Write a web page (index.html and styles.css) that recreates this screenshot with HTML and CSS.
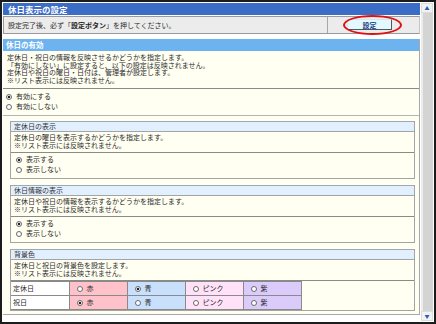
FILE: index.html
```html
<!DOCTYPE html>
<html lang="ja">
<head>
    <meta charset="UTF-8">
    <title>休日表示の設定</title>
    <link rel="stylesheet" href="styles.css">
</head>
<body>
    <div class="window">
        <div class="page">
            <div class="titlebar">休日表示の設定</div>

            <div class="notice">
                <div class="notice-text">設定完了後、必ず「<b>設定ボタン</b>」を押してください。</div>
                <div class="notice-btn">
                    <button class="btn">設定</button>
                    <span class="mark"></span>
                </div>
            </div>

            <div class="section">
                <div class="section-head">休日の有効</div>
                <div class="desc">
                    <p>定休日・祝日の情報を反映させるかどうかを指定します。</p>
                    <p>「有効にしない」に設定すると、以下の設定は反映されません。</p>
                    <p>定休日や祝日の曜日・日付は、管理者が設定します。</p>
                    <p>※リスト表示には反映されません。</p>
                </div>
                <div class="options">
                    <label class="opt"><input type="radio" name="enable" checked>有効にする</label>
                    <label class="opt"><input type="radio" name="enable">有効にしない</label>
                </div>

                <div class="sub">
                    <div class="sub-head">定休日の表示</div>
                    <div class="sub-desc">
                        <p>定休日の曜日を表示するかどうかを指定します。</p>
                        <p>※リスト表示には反映されません。</p>
                    </div>
                    <div class="sub-options">
                        <label class="opt"><input type="radio" name="weekday" checked>表示する</label>
                        <label class="opt"><input type="radio" name="weekday">表示しない</label>
                    </div>
                </div>

                <div class="sub">
                    <div class="sub-head">休日情報の表示</div>
                    <div class="sub-desc">
                        <p>定休日や祝日の情報を表示するかどうかを指定します。</p>
                        <p>※リスト表示には反映されません。</p>
                    </div>
                    <div class="sub-options">
                        <label class="opt"><input type="radio" name="info" checked>表示する</label>
                        <label class="opt"><input type="radio" name="info">表示しない</label>
                    </div>
                </div>

                <div class="sub">
                    <div class="sub-head">背景色</div>
                    <div class="sub-desc">
                        <p>定休日と祝日の背景色を設定します。</p>
                        <p>※リスト表示には反映されません。</p>
                    </div>
                    <table class="colors">
                        <tr>
                            <td class="name">定休日</td>
                            <td class="red"><label><input type="radio" name="c1">赤</label></td>
                            <td class="blue"><label><input type="radio" name="c1" checked>青</label></td>
                            <td class="pink"><label><input type="radio" name="c1">ピンク</label></td>
                            <td class="purple"><label><input type="radio" name="c1">紫</label></td>
                        </tr>
                        <tr>
                            <td class="name">祝日</td>
                            <td class="red"><label><input type="radio" name="c2" checked>赤</label></td>
                            <td class="blue"><label><input type="radio" name="c2">青</label></td>
                            <td class="pink"><label><input type="radio" name="c2">ピンク</label></td>
                            <td class="purple"><label><input type="radio" name="c2">紫</label></td>
                        </tr>
                    </table>
                </div>
            </div>
        </div>

        <div class="scrollbar">
            <div class="arrow">&#9650;</div>
            <div class="track"></div>
            <div class="arrow">&#9660;</div>
        </div>
    </div>
</body>
</html>
```

FILE: styles.css
```css
*{
    margin: 0;
    padding: 0;
    box-sizing: border-box;
}

body{
    font-family: "Noto Sans CJK JP", "Noto Sans", sans-serif;
    font-size: 7px;
    line-height: 7.5px;
    color: #2c2c2c;
    background-color: #fff;
}

.window{
    width: 436px;
    height: 324px;
    border: 2px solid #1c1c1c;
    padding: 1px;
    display: flex;
    gap: 1px;
    overflow: hidden;
}

.page{
    flex: 1;
    display: flex;
    flex-direction: column;
    overflow: hidden;
}

.titlebar{
    height: 12px;
    padding-left: 5px;
    background-color: #3b6cc6;
    color: #fff;
    font-size: 8.5px;
    line-height: 12px;
    font-weight: bold;
}

.notice{
    display: flex;
    height: 18px;
    margin-top: 1px;
    margin-bottom: 5px;
    background-color: #ececec;
    border: 1px solid #9a9a9a;
    border-right-color: #c4c4c4;
}

.notice-text{
    flex: 1;
    padding-left: 4px;
    line-height: 16px;
}

.notice-text b{
    color: #222;
}

.notice-btn{
    position: relative;
    width: 92px;
    border-left: 1px solid #a8a8a8;
}

.btn{
    display: block;
    width: 45px;
    height: 11px;
    margin: 2px 0 0 19px;
    background-color: #e4f9fd;
    border: 1px solid #4a5a60;
    border-top-color: #d0e8ee;
    border-left-color: #d0e8ee;
    color: #1d3f86;
    font-family: inherit;
    font-size: 7px;
    line-height: 8px;
    font-weight: bold;
}

.mark{
    position: absolute;
    left: 15px;
    top: -2px;
    width: 59px;
    height: 20px;
    border: 2px solid #e01010;
    border-radius: 50%;
}

.section{
    background-color: #fffff2;
    border-right: 1px solid #a8a8a8;
    border-bottom: 1px solid #a8a8a8;
    padding-bottom: 3px;
}

.section-head{
    height: 12px;
    padding-left: 3px;
    background-color: #6cb3f0;
    color: #fff;
    font-size: 7.5px;
    line-height: 12px;
    font-weight: bold;
}

.desc{
    padding: 3px 4px 4px;
    border-bottom: 1px solid #8a8a8a;
}

.options{
    padding: 3px 3px 3px;
    border-bottom: 1px solid #b4b4b4;
    margin-bottom: 5px;
}

.opt{
    display: flex;
    align-items: center;
    height: 10px;
}

input[type="radio"]{
    appearance: none;
    width: 6px;
    height: 6px;
    margin: 0 4px 0 0;
    border: 1px solid #6a6a6a;
    border-radius: 50%;
    background-color: #fff;
    flex: none;
}

input[type="radio"]:checked{
    background: radial-gradient(circle, #222 0 1.4px, #fff 1.6px);
}

.sub{
    margin: 0 4px 6px 7px;
    border: 1px solid #a4a4a4;
    border-top: none;
}

.sub:last-child{
    margin-bottom: 0;
}

.sub-head{
    height: 11px;
    padding-left: 3px;
    background-color: #e2efff;
    border-top: 1px solid #9aa8b8;
    border-bottom: 1px solid #a4a4a4;
    line-height: 9px;
    color: #333;
}

.sub-desc{
    padding: 2px 3px 3px;
    border-bottom: 1px solid #8a8a8a;
}

.sub-options{
    padding: 2px 5px 3px;
}

.colors{
    border-collapse: collapse;
}

.colors td{
    width: 58px;
    height: 14px;
    border: 1px solid #8a8a8a;
    padding: 0 0 0 7px;
}

.colors td.name{
    padding-left: 2px;
    background-color: #fff;
    border-left: none;
}

.colors label{
    display: flex;
    align-items: center;
}

.red{
    background-color: #ffc2ca;
}

.blue{
    background-color: #c9e0fd;
}

.pink{
    background-color: #ffe2f8;
}

.purple{
    background-color: #dacbfb;
}

.scrollbar{
    width: 12px;
    display: flex;
    flex-direction: column;
    background-color: #d4d4d4;
}

.arrow{
    height: 10px;
    background-color: #f2f2f2;
    border: 1px solid #dcdcdc;
    color: #2a5cb8;
    font-size: 5px;
    line-height: 8px;
    text-align: center;
}

.track{
    flex: 1;
    border-left: 2px solid #ececec;
}
```
